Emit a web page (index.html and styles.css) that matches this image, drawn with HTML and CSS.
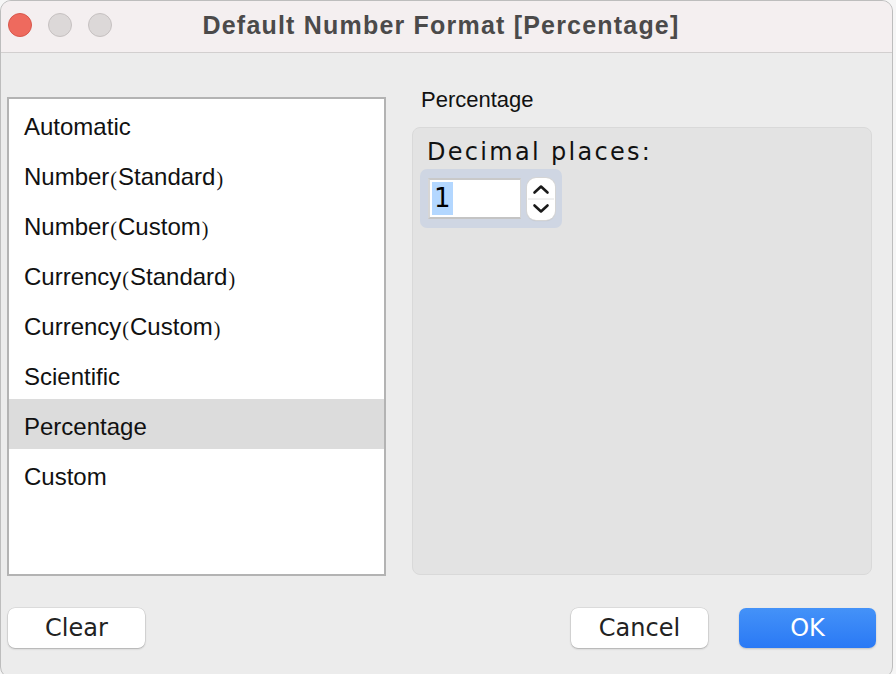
FILE: index.html
```html
<!DOCTYPE html>
<html>
<head>
<meta charset="utf-8">
<link rel="stylesheet" href="styles.css">
</head>
<body>
<div class="window">
  <div class="titlebar">
    <div class="lights">
      <span class="light red"></span>
      <span class="light gray"></span>
      <span class="light gray"></span>
    </div>
    <div class="title">Default Number Format [Percentage]</div>
  </div>
  <div class="main">
    <ul class="list">
      <li>Automatic</li>
      <li>Number<span class="p">(</span>Standard<span class="p">)</span></li>
      <li>Number<span class="p">(</span>Custom<span class="p">)</span></li>
      <li>Currency<span class="p">(</span>Standard<span class="p">)</span></li>
      <li>Currency<span class="p">(</span>Custom<span class="p">)</span></li>
      <li>Scientific</li>
      <li class="selected">Percentage</li>
      <li>Custom</li>
    </ul>
    <div class="right">
      <div class="label">Percentage</div>
      <div class="group">
        <div class="dec-label">Decimal places:</div>
        <div class="spinner">
          <div class="field"><span class="sel">1</span></div>
          <div class="stepper">
            <svg width="28" height="42" viewBox="0 0 28 42">
              <line x1="1" y1="21" x2="27" y2="21" stroke="#e2e2e2" stroke-width="1"/>
              <path d="M7.5 14.5 L14 8.5 L20.5 14.5" fill="none" stroke="#1a1a1a" stroke-width="2.6" stroke-linecap="round" stroke-linejoin="round"/>
              <path d="M7.5 27.5 L14 33.5 L20.5 27.5" fill="none" stroke="#1a1a1a" stroke-width="2.6" stroke-linecap="round" stroke-linejoin="round"/>
            </svg>
          </div>
        </div>
      </div>
    </div>
  </div>
  <div class="footer">
    <button class="btn">Clear</button>
    <div class="spacer"></div>
    <button class="btn">Cancel</button>
    <button class="btn primary">OK</button>
  </div>
</div>
</body>
</html>
```

FILE: styles.css
```css
html, body {
  margin: 0;
  padding: 0;
  background: #f6f6f6;
}
.window {
  width: 891px;
  height: 676px;
  border: 1px solid #bdbdbd;
  border-radius: 11px;
  background: #ececec;
  overflow: hidden;
  font-family: "Liberation Sans", Arial, sans-serif;
}
.titlebar {
  height: 51px;
  border-bottom: 1px solid #d2cfcf;
  background: #f4eff0;
  display: flex;
  align-items: center;
}
.lights {
  display: flex;
  gap: 16px;
  padding-left: 7px;
  margin-top: -3px;
}
.light {
  width: 24px;
  height: 24px;
  border-radius: 50%;
  box-sizing: border-box;
}
.light.red {
  background: #ee6a5e;
  border: 1px solid #d8574c;
}
.light.gray {
  background: #dcd8d8;
  border: 1px solid #c6c1c1;
}
.title {
  flex: 1;
  text-align: center;
  font-weight: bold;
  font-size: 25px;
  letter-spacing: 1.2px;
  color: #4b4a4a;
  padding-right: 122px;
  margin-top: -2px;
}
.main {
  display: grid;
  grid-template-columns: 379px 460px;
  column-gap: 26px;
  padding: 36px 0 0 6px;
  height: 487px;
}
.list {
  list-style: none;
  margin: 8px 0 0 0;
  padding: 0;
  height: 479px;
  box-sizing: border-box;
  border: 2px solid #b3b3b3;
  background: #ffffff;
}
.list li {
  height: 44px;
  line-height: 44px;
  padding-top: 6px;
  padding-left: 15px;
  font-size: 24px;
  color: #111;
}
.list li .p {
  font-family: "Liberation Serif", serif;
  font-size: 20px;
  padding: 0 1px;
  position: relative;
  top: 1px;
}
.list li.selected {
  background: #dcdcdc;
}
.right {
  display: flex;
  flex-direction: column;
}
.label {
  font-size: 22px;
  line-height: 24px;
  color: #111;
  padding-left: 9px;
  margin-top: -1px;
}
.group {
  margin-top: 15px;
  height: 448px;
  box-sizing: border-box;
  border: 1px solid #d9d9d9;
  border-radius: 8px;
  background: #e3e3e3;
  padding: 8px 7px;
}
.dec-label {
  font-family: "DejaVu Sans", sans-serif;
  font-size: 24px;
  letter-spacing: 2.3px;
  color: #111;
  padding-left: 7px;
  line-height: 32px;
}
.spinner {
  margin-top: 1px;
  width: 142px;
  height: 59px;
  box-sizing: border-box;
  background: #cfd6e3;
  border-radius: 7px;
  display: flex;
  align-items: flex-start;
  gap: 6px;
  padding: 9px 7px 0 8px;
}
.field {
  width: 93px;
  height: 41px;
  box-sizing: border-box;
  background: #fff;
  border-top: 2px solid #c9c9c9;
  border-left: 2px solid #d6d6d6;
  border-right: 1px solid #d6d6d6;
  border-bottom: 2px solid #c4c4c4;
  padding: 2px 0 0 2px;
}
.sel {
  display: inline-block;
  background: #b3d7ff;
  font-family: "DejaVu Sans", sans-serif;
  font-size: 26px;
  line-height: 33px;
  padding: 0 2px 0 2px;
  color: #000;
}
.stepper {
  width: 28px;
  height: 42px;
  background: #fff;
  border-radius: 9px;
  box-shadow: 0 0 0 1px #d5d5d5, 0 1px 1px rgba(0,0,0,0.15);
}
.stepper svg {
  display: block;
}
.footer {
  display: flex;
  align-items: center;
  padding: 32px 16px 0 7px;
  gap: 31px;
}
.spacer {
  flex: 1;
}
.btn {
  width: 137px;
  height: 40px;
  border: none;
  border-radius: 7px;
  background: #ffffff;
  box-shadow: 0 0 0 0.5px rgba(0,0,0,0.12), 0 1px 2px rgba(0,0,0,0.22);
  font-family: "DejaVu Sans", sans-serif;
  font-size: 24px;
  color: #222;
  padding: 0;
}
.btn.primary {
  background: linear-gradient(#4492f8, #2a79f5);
  color: #fff;
  box-shadow: 0 1px 2px rgba(0,0,0,0.18);
}
```
